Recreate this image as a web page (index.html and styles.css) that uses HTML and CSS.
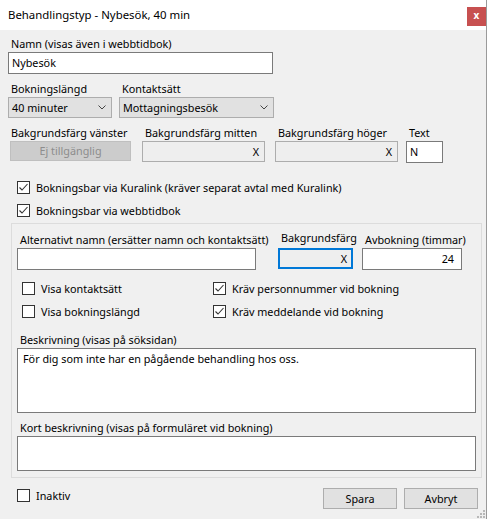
FILE: index.html
```html
<!DOCTYPE html>
<html lang="sv">
<head>
<meta charset="utf-8">
<title>Behandlingstyp</title>
<link rel="stylesheet" href="styles.css">
</head>
<body>
<div class="window">
  <div class="titlebar">
    <span class="title">Behandlingstyp - Nybesök, 40 min</span>
    <span class="close">x</span>
  </div>
  <div class="content">
    <div class="field">
      <div class="lbl">Namn (visas även i webbtidbok)</div>
      <div class="input w-name">Nybesök</div>
    </div>

    <div class="select-row">
      <div class="field">
        <div class="lbl">Bokningslängd</div>
        <div class="select w-len"><span>40 minuter</span><svg class="chev" width="8" height="5" viewBox="0 0 8 5"><polyline points="0.5,0.5 4,4 7.5,0.5" fill="none" stroke="#444" stroke-width="1"/></svg></div>
      </div>
      <div class="field">
        <div class="lbl">Kontaktsätt</div>
        <div class="select w-kontakt"><span>Mottagningsbesök</span><svg class="chev" width="8" height="5" viewBox="0 0 8 5"><polyline points="0.5,0.5 4,4 7.5,0.5" fill="none" stroke="#444" stroke-width="1"/></svg></div>
      </div>
    </div>

    <div class="color-grid">
      <div class="lbl">Bakgrundsfärg vänster</div>
      <div class="lbl">Bakgrundsfärg mitten</div>
      <div class="lbl">Bakgrundsfärg höger</div>
      <div class="lbl">Text</div>
      <div class="btn-disabled">Ej tillgänglig</div>
      <div class="colorbox w-color">X</div>
      <div class="colorbox w-color">X</div>
      <div class="input w-text">N</div>
    </div>

    <div class="checks-top">
      <div class="check"><span class="box"><svg width="11" height="11" viewBox="0 0 11 11"><polyline points="1.5,5.5 4,8 9.5,2" fill="none" stroke="#333" stroke-width="1.1"/></svg></span>Bokningsbar via Kuralink (kräver separat avtal med Kuralink)</div>
      <div class="check"><span class="box"><svg width="11" height="11" viewBox="0 0 11 11"><polyline points="1.5,5.5 4,8 9.5,2" fill="none" stroke="#333" stroke-width="1.1"/></svg></span>Bokningsbar via webbtidbok</div>
    </div>

    <div class="group">
      <div class="alt-grid">
        <div class="lbl">Alternativt namn (ersätter namn och kontaktsätt)</div>
        <div class="lbl lbl-tight">Bakgrundsfärg</div>
        <div class="lbl">Avbokning (timmar)</div>
        <div class="input w-alt"></div>
        <div class="colorbox focused w-bg">X</div>
        <div class="input w-avb num">24</div>
      </div>

      <div class="checks-grid">
        <div class="check"><span class="box"></span>Visa kontaktsätt</div>
        <div class="check"><span class="box"><svg width="11" height="11" viewBox="0 0 11 11"><polyline points="1.5,5.5 4,8 9.5,2" fill="none" stroke="#333" stroke-width="1.1"/></svg></span>Kräv personnummer vid bokning</div>
        <div class="check"><span class="box"></span>Visa bokningslängd</div>
        <div class="check"><span class="box"><svg width="11" height="11" viewBox="0 0 11 11"><polyline points="1.5,5.5 4,8 9.5,2" fill="none" stroke="#333" stroke-width="1.1"/></svg></span>Kräv meddelande vid bokning</div>
      </div>

      <div class="field desc">
        <div class="lbl">Beskrivning (visas på söksidan)</div>
        <div class="textarea ta-desc">För dig som inte har en pågående behandling hos oss.</div>
      </div>
      <div class="field short">
        <div class="lbl">Kort beskrivning (visas på formuläret vid bokning)</div>
        <div class="textarea ta-short"></div>
      </div>
    </div>

    <div class="footer">
      <div class="check inaktiv"><span class="box"></span>Inaktiv</div>
      <div class="buttons">
        <div class="button">Spara</div>
        <div class="button">Avbryt</div>
      </div>
    </div>
  </div>
  <svg class="grip" width="9" height="9" viewBox="0 0 9 9">
    <rect x="7" y="1" width="2" height="2" fill="#b8b8b8"/>
    <rect x="4" y="4" width="2" height="2" fill="#b8b8b8"/>
    <rect x="7" y="4" width="2" height="2" fill="#b8b8b8"/>
    <rect x="1" y="7" width="2" height="2" fill="#b8b8b8"/>
    <rect x="4" y="7" width="2" height="2" fill="#b8b8b8"/>
    <rect x="7" y="7" width="2" height="2" fill="#b8b8b8"/>
  </svg>
</div>
</body>
</html>
```

FILE: styles.css
```css
* { box-sizing: border-box; }
html, body { margin: 0; padding: 0; background: #ffffff; }
body {
  font-family: "Noto Sans", "Open Sans", sans-serif;
  font-size: 10.8px;
  color: #000;
}
.window {
  position: relative;
  width: 487px;
  height: 519px;
  background: #f0f0f0;
  border-right: 1px solid #9a9a9a;
}
.titlebar {
  height: 30px;
  background: #ffffff;
  display: flex;
  align-items: center;
  justify-content: space-between;
  padding-left: 8px;
}
.title { font-size: 11.4px; line-height: 16px; }
.close {
  width: 19px;
  height: 19px;
  background: #c75050;
  color: #fff;
  font-weight: bold;
  font-size: 10px;
  line-height: 17px;
  text-align: center;
  margin-top: 3px;
}
.content { padding: 6px 0 0 8px; }
.field { display: flex; flex-direction: column; }
.lbl { line-height: 16px; padding-left: 3px; white-space: nowrap; }
.input {
  height: 22px;
  background: #fff;
  border: 1px solid #7a7a7a;
  line-height: 20px;
  padding: 0 3px;
  white-space: nowrap;
}
.w-name { width: 265px; }
.select-row { display: flex; gap: 7px; margin-top: 7px; }
.select {
  height: 21px;
  background: #e1e1e1;
  border: 1px solid #adadad;
  display: flex;
  align-items: center;
  justify-content: space-between;
  padding: 0 5px 0 3px;
  line-height: 19px;
}
.chev { display: block; }
.w-len { width: 104px; }
.w-kontakt { width: 155px; }
.color-grid {
  display: grid;
  grid-template-columns: 134px 133px 131px auto;
  margin-top: 7px;
  align-items: start;
}
.btn-disabled {
  width: 121px;
  height: 20px;
  margin-left: 2px;
  background: #cccccc;
  border: 1px solid #bfbfbf;
  color: #8d8d8d;
  text-align: center;
  line-height: 18px;
}
.colorbox {
  height: 21px;
  background: #eeeeee;
  border: 1px solid #adadad;
  text-align: right;
  padding-right: 5px;
  line-height: 19px;
}
.w-color { width: 123px; }
.w-text { width: 37px; }
.checks-top { margin-top: 13px; padding-left: 9px; }
.check { display: flex; align-items: center; height: 23px; white-space: nowrap; }
.box {
  width: 13px;
  height: 13px;
  border: 1px solid #333;
  background: #fff;
  margin-right: 6px;
  flex: none;
  display: flex;
  align-items: center;
  justify-content: center;
}
.box svg { display: block; }
.group {
  margin: 1px 0 0 3px;
  width: 471px;
  border: 1px solid #dcdcdc;
  padding: 8px 0 6px 5px;
}
.alt-grid {
  display: grid;
  grid-template-columns: 261px 84px auto;
  align-items: start;
}
.lbl-tight { line-height: 12px; }
.w-alt { width: 239px; }
.w-bg { width: 75px; }
.w-avb { width: 100px; }
.num { text-align: right; padding-right: 7px; }
.focused { border: 2px solid #0078d7; line-height: 17px; padding-right: 4px; }
.checks-grid {
  display: grid;
  grid-template-columns: 191px auto;
  margin-top: 7px;
  padding-left: 5px;
}
.desc { margin-top: 9px; }
.short { margin-top: 7px; }
.textarea {
  width: 459px;
  background: #fff;
  border: 1px solid #7a7a7a;
  padding: 2px 5px;
  line-height: 16px;
}
.ta-desc { height: 65px; }
.ta-short { height: 35px; }
.footer {
  display: flex;
  align-items: flex-start;
  justify-content: space-between;
  width: 470px;
  margin-top: 10px;
  padding-left: 9px;
}
.inaktiv { height: 15px; }
.buttons { display: flex; gap: 7px; }
.button {
  width: 74px;
  height: 21px;
  background: #e1e1e1;
  border: 1px solid #adadad;
  text-align: center;
  line-height: 19px;
}
.grip { position: absolute; right: 1px; bottom: 1px; }
```
